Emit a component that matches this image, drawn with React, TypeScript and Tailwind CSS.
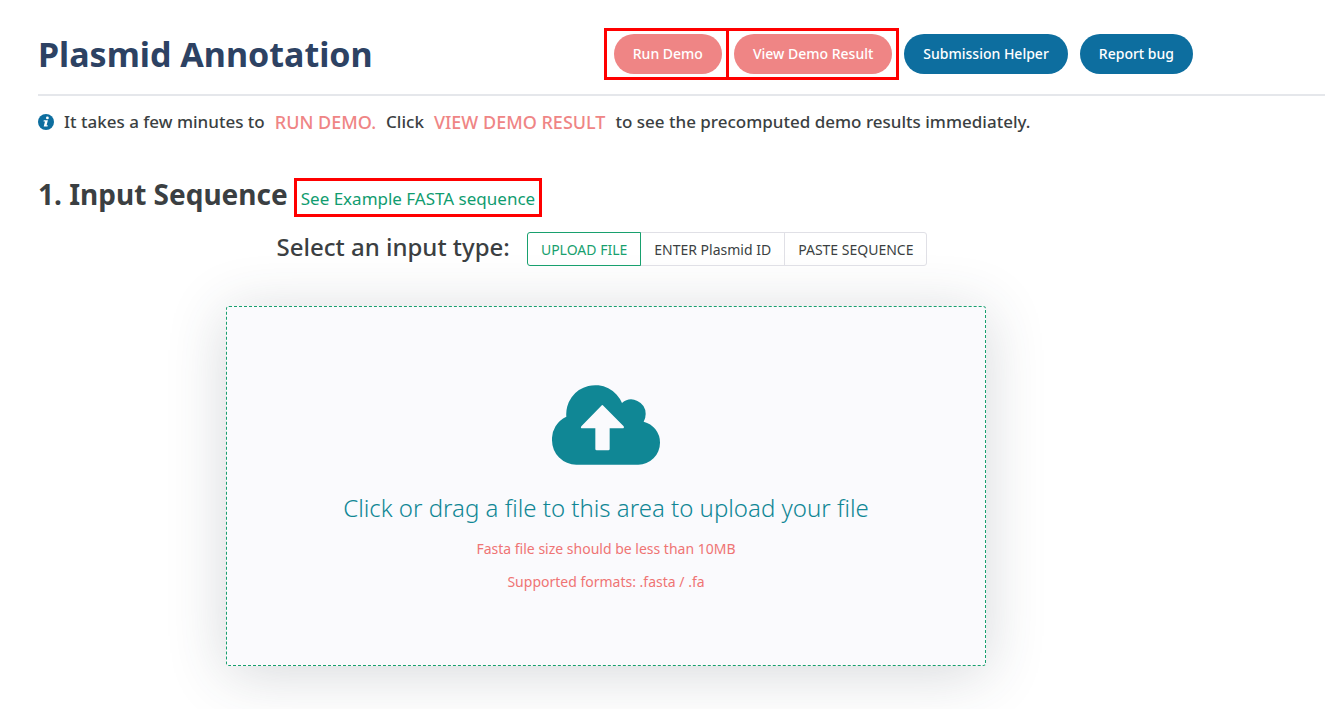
import { useState } from "react";

function InfoIcon() {
  return (
    <svg viewBox="0 0 16 16" className="size-4 shrink-0" aria-hidden="true">
      <circle cx="8" cy="8" r="8" fill="#0d6e9f" />
      <circle cx="9.4" cy="3.9" r="1.4" fill="#fff" />
      <path d="M5.8 6.2h4.1L8.6 11.2h1.2l-.3 1.3H5.7L7 7.5H5.5z" fill="#fff" />
    </svg>
  );
}

function CloudUploadIcon() {
  return (
    <svg viewBox="66 45 324 240" className="h-20 w-[108px]" aria-hidden="true">
      <path
        fill="#108795"
        d="M139 284A73 73 0 0 1 66 211A74 74 0 0 1 109 140A87 87 0 0 1 276 99A43 43 0 0 1 347 132Q347 145 341 155A65 65 0 0 1 390 218A65 66 0 0 1 324 284Z"
      />
      <path
        fill="#fafafd"
        d="M214 107Q217 103 220 107L281 169Q284 175 277 175H239V237Q239 241 235 241H200Q196 241 196 237V175H157Q150 175 154 169Z"
      />
    </svg>
  );
}

const pill = "h-10 rounded-full px-[19px] text-sm font-medium text-white whitespace-nowrap";
const inputTypes = ["UPLOAD FILE", "ENTER Plasmid ID", "PASTE SEQUENCE"];

export default function App() {
  const [selected, setSelected] = useState(inputTypes[0]);
  return (
    <div className="min-h-screen overflow-hidden bg-white pl-[38px] font-['Noto_Sans',sans-serif] text-[#3b3f42]">
      <header className="flex items-center justify-between border-b-2 border-[#e5e7eb] pt-7 pr-[132px] pb-3.5">
        <h1 className="text-[34px] font-bold whitespace-nowrap text-[#2d4263]">Plasmid Annotation</h1>
        <div className="flex items-center">
          <div className="border-3 border-[#ff0000] py-[3px] pr-1 pl-[7px]">
            <button className={`${pill} bg-[#ef8585]`}>Run Demo</button>
          </div>
          <div className="-ml-[3px] border-3 border-[#ff0000] py-[3px] pr-1 pl-[5px]">
            <button className={`${pill} bg-[#ef8585]`}>View Demo Result</button>
          </div>
          <button className={`${pill} ml-[5px] bg-[#0d6e9f]`}>Submission Helper</button>
          <button className={`${pill} ml-3 bg-[#0d6e9f]`}>Report bug</button>
        </div>
      </header>

      <main className="pr-[151px]">
        <p className="mt-3 flex items-center gap-2.5 text-[17px] leading-7 font-medium whitespace-nowrap">
          <InfoIcon />
          <span>It takes a few minutes to</span>
          <span className="text-lg text-[#ef8585]">RUN DEMO.</span>
          <span>Click</span>
          <span className="text-lg text-[#ef8585]">VIEW DEMO RESULT</span>
          <span>to see the precomputed demo results immediately.</span>
        </p>

        <div className="mt-[42px] flex items-start gap-1.5">
          <h2 className="text-[28px] leading-8 font-bold whitespace-nowrap">1. Input Sequence</h2>
          <a
            href="#example"
            className="border-3 border-[#ff0000] px-1 pt-1 pb-px text-[17px] leading-7 whitespace-nowrap text-[#109c6f]"
          >
            See Example FASTA sequence
          </a>
        </div>

        <div className="mt-3.5 flex items-center justify-center gap-[18px] pr-2">
          <h3 className="pb-1 text-2xl font-medium whitespace-nowrap">Select an input type:</h3>
          <div className="flex">
            {inputTypes.map((type) => (
              <button
                key={type}
                aria-pressed={selected === type}
                onClick={() => setSelected(type)}
                className="-ml-px h-[34px] border border-[#e0e0e6] px-[13px] pt-0.5 text-sm whitespace-nowrap first:rounded-l-[3px] last:rounded-r-[3px] aria-pressed:z-10 aria-pressed:border-[#18a06e] aria-pressed:text-[#18a06e]"
              >
                {type}
              </button>
            ))}
          </div>
        </div>

        <label className="mx-auto mt-[39px] flex h-[360px] max-w-[760px] cursor-pointer flex-col items-center rounded-[3px] border border-dashed border-[#18a06e] bg-[#fafafd] pt-[78px] shadow-[0_7px_60px_rgba(50,60,75,0.2)]">
          <input type="file" accept=".fasta,.fa" className="sr-only" />
          <CloudUploadIcon />
          <span className="mt-[27px] text-2xl font-light text-[#108795]">
            Click or drag a file to this area to upload your file
          </span>
          <span className="mt-[15px] text-sm text-[#ef7474]">Fasta file size should be less than 10MB</span>
          <span className="mt-[13px] text-sm text-[#ef7474]">Supported formats: .fasta / .fa</span>
        </label>
      </main>
    </div>
  );
}
